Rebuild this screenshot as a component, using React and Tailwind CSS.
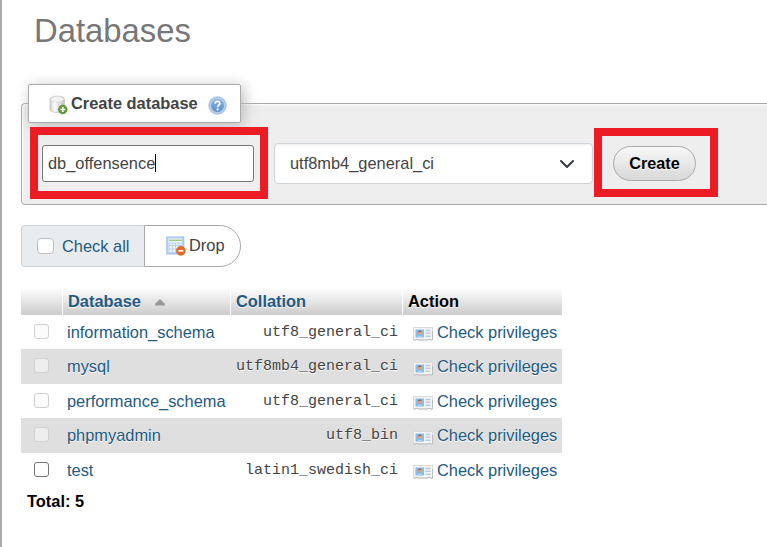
import React from "react";

const rows = [
  { name: "information_schema", collation: "utf8_general_ci", locked: true },
  { name: "mysql", collation: "utf8mb4_general_ci", locked: true },
  { name: "performance_schema", collation: "utf8_general_ci", locked: true },
  { name: "phpmyadmin", collation: "utf8_bin", locked: true },
  { name: "test", collation: "latin1_swedish_ci", locked: false },
];

function NewDatabaseIcon() {
  return (
    <svg width="19" height="20" viewBox="0 0 19 20">
      <defs>
        <linearGradient id="cyl" x1="0" x2="1" y1="0" y2="0">
          <stop offset="0" stopColor="#c9c9c9" />
          <stop offset=".3" stopColor="#fafafa" />
          <stop offset="1" stopColor="#c4c4c4" />
        </linearGradient>
      </defs>
      <path d="M1 4C1 .2 15.500 .2 15.500 4V14.500C15.500 18.500 1 18.500 1 14.500Z" fill="url(#cyl)" stroke="#cfcfcf" />
      <ellipse cx="8.200" cy="4.200" rx="6.200" ry="2.500" fill="#f4f4f4" stroke="#dedede" strokeWidth=".6" />
      <circle cx="13.800" cy="14.500" r="4.300" fill="#5e9e35" stroke="#4c862a" strokeWidth=".8" />
      <path d="M13.800 12V17M11.300 14.500H16.300" stroke="#fff" strokeWidth="1.700" />
    </svg>
  );
}

function HelpIcon() {
  return (
    <svg width="19" height="19" viewBox="0 0 19 19">
      <defs>
        <linearGradient id="help" x1="0" x2="0" y1="0" y2="1">
          <stop offset="0" stopColor="#8fb2dc" />
          <stop offset="1" stopColor="#5b8fca" />
        </linearGradient>
      </defs>
      <circle cx="9.500" cy="9.500" r="8.700" fill="#b5cdea" stroke="#94b5dc" strokeWidth=".8" />
      <circle cx="9.500" cy="9.500" r="6.500" fill="url(#help)" />
      <path d="M7 7.600C7.100 4.500 12 4.700 11.900 7.400C11.800 9.100 9.600 9.100 9.600 11.200" fill="none" stroke="#fff" strokeWidth="1.700" />
      <circle cx="9.600" cy="13.400" r="1.100" fill="#fff" />
    </svg>
  );
}

function DropIcon() {
  return (
    <svg width="20" height="20" viewBox="0 0 20 20">
      <rect x=".8" y="1" width="17" height="17" fill="#bcd3f2" stroke="#9dbdea" />
      <rect x="2.500" y="2.500" width="13.500" height="14" fill="#f3f8ff" />
      <path d="M3 4.300H16" stroke="#9bcf83" strokeWidth="1.500" />
      <path d="M3 7H16V9.500H3ZM3 9.500V16.500H16V9.500M3 13H16M6.300 7V16.500M9.600 7V16.500M13 7V16.500" fill="none" stroke="#b9cfec" />
      <circle cx="14.800" cy="14.800" r="4.500" fill="#e56a20" stroke="#d9692e" strokeWidth=".7" />
      <path d="M12.300 14.800H17.300" stroke="#fff" strokeWidth="1.800" />
    </svg>
  );
}

function PrivilegesIcon() {
  return (
    <svg width="20" height="14" viewBox="0 0 20 14">
      <path d="M.5 .5H19.500V12.800H17L16 11.800L15 12.800H5L4 11.800L3 12.800H.5Z" fill="#f5f5f5" stroke="#dadada" />
      <path d="M.5 13H3L4 12L5 13H15L16 12L17 13H19.500V4" fill="none" stroke="#bdbdbd" />
      <rect x="2.500" y="2.500" width="8.500" height="8" fill="#84bcf4" />
      <path d="M4.500 10.500C4.500 8 9 8 9 10.500Z" fill="#b5d5f7" />
      <circle cx="6.800" cy="5.900" r="2" fill="#d9a477" />
      <path d="M4.900 5.300C4.900 2.900 8.700 2.900 8.700 5.300L7 4.700Z" fill="#8a6a50" />
      <path d="M12.500 3.500H17.500M12.500 6.300H17.500M12.500 9.200H17.500" stroke="#b9cbe0" strokeWidth="1.400" />
    </svg>
  );
}

export default function App() {
  return (
    <div className="relative h-[547px] w-[767px] overflow-hidden border-l-2 border-[#aaa] bg-white pl-[19px] font-['Liberation_Sans',Arial,sans-serif] text-[16.4px] text-[#444]">
      <h1 className="pl-[13px] pt-[13px] text-[32.8px] leading-[36px] text-[#777]">Databases</h1>

      <fieldset className="mt-[54px] block h-[102px] w-[780px] rounded border border-[#aaa] bg-[#eee] shadow-[inset_1px_1px_2px_#fff]">
        <div className="ml-[6px] -mt-[20px] flex h-[39px] w-[213px] items-center rounded-[2px] border border-[#aaa] bg-white pl-5 shadow-[3px_3px_15px_#bbb]">
          <span className="mt-[3px]"><NewDatabaseIcon /></span>
          <span className="ml-[3px] w-[137px] whitespace-nowrap pb-0.5 font-bold leading-5">Create database</span>
          <span className="mt-[3px]"><HelpIcon /></span>
        </div>
        <div className="mt-[20px] flex h-[41px] items-center pl-5">
          <div className="flex h-[37px] w-[212px] items-center rounded-[3px] border border-[#767676] bg-white pb-0.5 pl-[5px] leading-5">
            db_offensence<span className="h-[18px] w-px bg-black" />
          </div>
          <div className="ml-5 flex h-[41px] w-[319px] items-center justify-between rounded border border-[#ced4da] bg-white pl-[15px] pr-[17px] shadow-[inset_0_1px_2px_rgba(0,0,0,0.075)]">
            <span>utf8mb4_general_ci</span>
            <svg width="16" height="16" viewBox="0 0 16 16" fill="none" stroke="#343a40" strokeWidth="2" strokeLinecap="round" strokeLinejoin="round">
              <path d="M2 5L8 11L14 5" />
            </svg>
          </div>
          <button className="ml-5 h-[35px] w-[83px] rounded-[18px] border border-[#aaa] bg-linear-to-b from-[#f8f8f8] to-[#d8d8d8] text-[16.2px] font-bold text-black [text-shadow:0_1px_0_#fff]">
            Create
          </button>
        </div>
      </fieldset>
      <div className="absolute left-[28px] top-[127px] h-[72px] w-[238px] border-8 border-[#ed1c24]" />
      <div className="absolute left-[592px] top-[128px] h-[69px] w-[124px] border-8 border-[#ed1c24]" />

      <div className="mt-5 flex h-[42px]">
        <label className="flex w-[123px] items-center rounded-l border border-r-0 border-[#ced4da] bg-[#e9ecef] pl-[15px] text-[#235a81]">
          <span className="mr-[8px] h-4 w-[17px] rounded-[4px] border border-[#bfbfbf] bg-white" />
          Check all
        </label>
        <button className="flex w-[97px] items-center rounded-r-[21px] border border-[#aaa] bg-white pl-[21px]">
          <DropIcon />
          <span className="ml-[3px] pb-0.5 leading-5">Drop</span>
        </button>
      </div>

      <div className="mt-[21px] w-[541px]">
        <div className="grid h-[27px] grid-cols-[41px_167px_171px_159px] gap-px font-bold text-[#235a81] [&>div]:bg-linear-to-b [&>div]:from-white [&>div]:to-[#ccc] [&>div]:leading-[27px] [text-shadow:0_1px_0_#fff]">
          <div />
          <div className="flex items-center pl-[5px]">
            Database
            <svg className="ml-[14px] mt-[2px]" width="10" height="7" viewBox="0 0 10 7">
              <path d="M5 0L10 5V6.500H0V5Z" fill="#999" />
            </svg>
          </div>
          <div className="pl-[5px]">Collation</div>
          <div className="pl-[5px] text-black">Action</div>
        </div>
        {rows.map((row, i) => (
          <div
            key={row.name}
            className={`grid grid-cols-[46px_167px_164px_164px] items-start [text-shadow:0_1px_0_#fff] ${i % 2 ? "h-[35px] bg-[#dfdfdf]" : "h-[34px] bg-white"}`}
          >
            <span className={`mt-[9px] ml-[13px] size-[15px] rounded-[3px] border ${row.locked ? "border-[#d0d0d0] bg-[#f8f8f8]/60" : "border-[#767676] bg-white"}`} />
            <span className="leading-[34px] text-[#235a81]">{row.name}</span>
            <span className="pt-px text-right font-['Liberation_Mono',monospace] text-[15px] leading-[34px]">{row.collation}</span>
            <span className="flex items-start pl-[15px] leading-[34px] text-[#235a81]">
              <span className={`mr-[4px] ${i % 2 ? "mt-[13px]" : "mt-[12px]"}`}><PrivilegesIcon /></span>
              <span className="whitespace-nowrap">Check privileges</span>
            </span>
          </div>
        ))}
      </div>
      <div className="pl-[6px] pt-1 font-bold leading-5 text-black">Total: 5</div>
    </div>
  );
}
